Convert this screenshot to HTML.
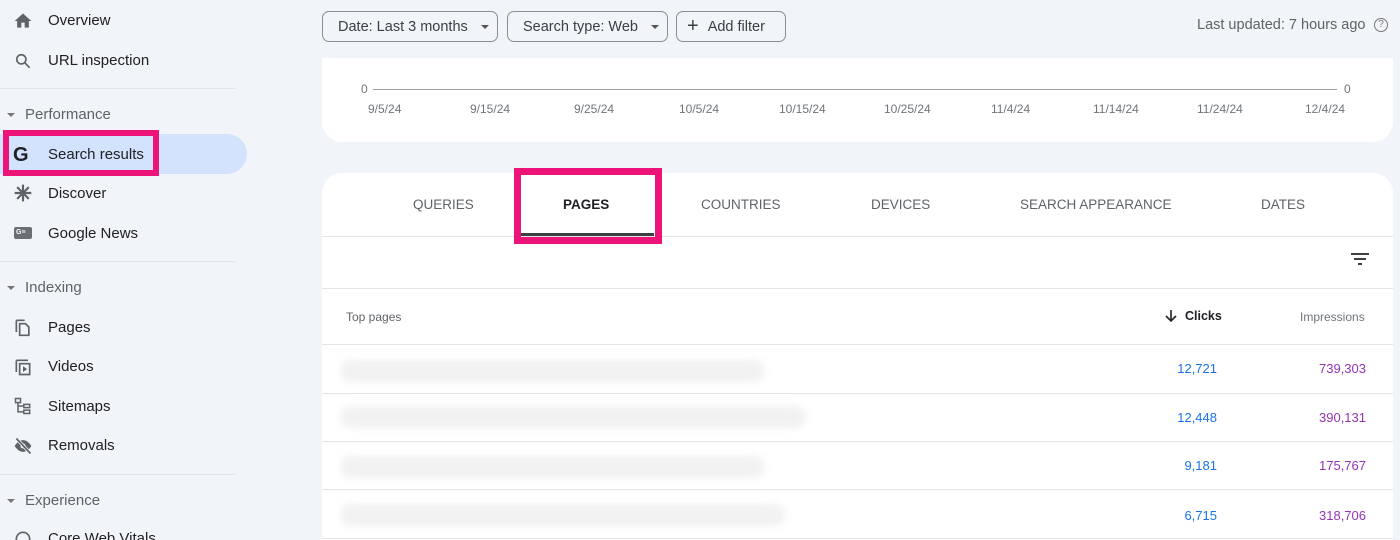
<!DOCTYPE html>
<html><head><style>
*{margin:0;padding:0;box-sizing:border-box}
html,body{width:1400px;height:540px;overflow:hidden}
body{background:#f1f4f9;font-family:"Liberation Sans",sans-serif;position:relative;color:#202124}
.a{position:absolute}
.nav{left:48px;font-size:15px;color:#202124}
.sec{left:25px;font-size:15px;color:#5f6368}
.tri{left:7px;width:0;height:0;border-left:4px solid transparent;border-right:4px solid transparent;border-top:4px solid #777}
.hr{left:0;width:235px;height:1px;background:#e0e3e8}
.ic{left:13px;width:20px;height:20px}
.btn{top:11px;height:31px;border:1px solid #8a8d91;border-radius:7px;font-size:14.5px;color:#3c4043;display:flex;align-items:center;padding-left:15px}
.dd{display:inline-block;width:0;height:0;border-left:4px solid transparent;border-right:4px solid transparent;border-top:4px solid #555;margin-left:13px}
.dt{top:102px;font-size:12px;color:#70757a}
.tab{top:197px;font-size:13.5px;color:#5f6368;letter-spacing:0}
.line{left:322px;width:1071px;height:1px;background:#e3e5e8}
.blur{left:340px;height:22px;border-radius:11px;background:#f1f1f1;filter:blur(4px)}
.c{font-size:13px;color:#1a73e8;text-align:right;width:100px}
.i{font-size:13px;color:#9334b7;text-align:right;width:100px}
</style></head><body>
<div class="a" style="left:0;top:134px;width:247px;height:40px;background:#d3e3fd;border-radius:0 20px 20px 0"></div>
<svg class="a ic" style="top:11px" viewBox="0 0 24 24"><path d="M10 20v-6h4v6h5v-8h3L12 3 2 12h3v8z" fill="#5f6368"/></svg>
<div class="a nav" style="top:12px">Overview</div>
<svg class="a ic" style="top:51px" viewBox="0 0 24 24"><circle cx="10" cy="10" r="5.5" fill="none" stroke="#5f6368" stroke-width="2"/><path d="M14 14l6 6" stroke="#5f6368" stroke-width="2"/></svg>
<div class="a nav" style="top:52px">URL inspection</div>
<div class="a hr" style="top:88px"></div>
<div class="a tri" style="top:113px"></div><div class="a sec" style="top:106px">Performance</div>
<div class="a" style="left:13px;top:144px;font-size:20px;font-weight:bold;color:#202124">G</div>
<div class="a nav" style="top:146px">Search results</div>
<div class="a" style="left:3px;top:130px;width:156px;height:46px;border:6px solid #ec1478"></div>
<svg class="a ic" style="top:183px" viewBox="0 0 24 24"><path d="M12 2v20M2 12h20M5 5l14 14M19 5L5 19" stroke="#5f6368" stroke-width="2.6"/></svg>
<div class="a nav" style="top:185px">Discover</div>
<div class="a" style="left:14px;top:227px;width:18px;height:12px;background:#6b6f74;border-radius:2px;color:#fff;font-size:7px;font-weight:bold;line-height:12px;padding-left:2px">G≡</div>
<div class="a nav" style="top:225px">Google News</div>
<div class="a hr" style="top:261px"></div>
<div class="a tri" style="top:286px"></div><div class="a sec" style="top:279px">Indexing</div>
<svg class="a ic" style="top:317px" viewBox="0 0 24 24"><path d="M4 4v14M4 4h10M8 8h7l4 4v10H8z" fill="none" stroke="#5f6368" stroke-width="2"/></svg>
<div class="a nav" style="top:319px">Pages</div>
<svg class="a ic" style="top:357px" viewBox="0 0 24 24"><path d="M4 4v14M4 4h14M8 8h12v13H8z" fill="none" stroke="#5f6368" stroke-width="2"/><path d="M12 11v7l5-3.5z" fill="#5f6368"/></svg>
<div class="a nav" style="top:358px">Videos</div>
<svg class="a ic" style="top:396px" viewBox="0 0 24 24"><path d="M3 3h6v5H3zM13 10h7v4h-7zM13 17h7v4h-7zM6 8v11h7M6 12h7" fill="none" stroke="#5f6368" stroke-width="1.8"/></svg>
<div class="a nav" style="top:398px">Sitemaps</div>
<svg class="a ic" style="top:436px" viewBox="0 0 24 24"><path d="M2 12s4-7 10-7 10 7 10 7-4 7-10 7S2 12 2 12z" fill="#5f6368"/><circle cx="12" cy="12" r="3" fill="#f1f4f9"/><path d="M4 3l17 18" stroke="#f1f4f9" stroke-width="4"/><path d="M4 3l17 18" stroke="#5f6368" stroke-width="2"/></svg>
<div class="a nav" style="top:437px">Removals</div>
<div class="a hr" style="top:474px"></div>
<div class="a tri" style="top:499px"></div><div class="a sec" style="top:492px">Experience</div>
<svg class="a ic" style="top:529px" viewBox="0 0 24 24"><circle cx="12" cy="12" r="8" fill="none" stroke="#5f6368" stroke-width="2"/></svg>
<div class="a nav" style="top:530px">Core Web Vitals</div>
<div class="a btn" style="left:322px;width:176px">Date: Last 3 months<span class="dd"></span></div>
<div class="a btn" style="left:507px;width:161px">Search type: Web<span class="dd"></span></div>
<div class="a btn" style="left:676px;width:110px;padding-left:10px"><span style="font-size:20px;margin-right:9px;font-weight:300">+</span>Add filter</div>
<div class="a" style="left:1197px;top:17px;font-size:14.5px;color:#5f6368">Last updated: 7 hours ago</div>
<div class="a" style="left:1374px;top:18px;width:14px;height:14px;border:1.5px solid #777;border-radius:50%;font-size:10px;text-align:center;line-height:11px;color:#777">?</div>
<div class="a" style="left:322px;top:58px;width:1071px;height:84px;background:#fff;border-radius:0 0 20px 20px"></div>
<div class="a" style="left:361px;top:82px;font-size:12px;color:#70757a">0</div>
<div class="a" style="left:373px;top:89px;width:964px;height:1px;background:#9aa0a6"></div>
<div class="a" style="left:1344px;top:82px;font-size:12px;color:#70757a">0</div>
<div class="a dt" style="left:368px">9/5/24</div>
<div class="a dt" style="left:470px">9/15/24</div>
<div class="a dt" style="left:574px">9/25/24</div>
<div class="a dt" style="left:679px">10/5/24</div>
<div class="a dt" style="left:779px">10/15/24</div>
<div class="a dt" style="left:884px">10/25/24</div>
<div class="a dt" style="left:991px">11/4/24</div>
<div class="a dt" style="left:1093px">11/14/24</div>
<div class="a dt" style="left:1197px">11/24/24</div>
<div class="a dt" style="left:1305px">12/4/24</div>
<div class="a" style="left:322px;top:173px;width:1071px;height:370px;background:#fff;border-radius:20px 20px 0 0"></div>
<div class="a tab" style="left:413px">QUERIES</div>
<div class="a tab" style="left:563px;color:#202124;font-weight:bold">PAGES</div>
<div class="a tab" style="left:701px">COUNTRIES</div>
<div class="a tab" style="left:871px">DEVICES</div>
<div class="a tab" style="left:1020px">SEARCH APPEARANCE</div>
<div class="a tab" style="left:1261px">DATES</div>
<div class="a line" style="top:236px"></div>
<div class="a" style="left:521px;top:233px;width:133px;height:3px;background:#3c4043"></div>
<div class="a" style="left:514px;top:168px;width:148px;height:76px;border:7px solid #ec1478"></div>
<svg class="a" style="left:1350px;top:251px" width="20" height="16" viewBox="0 0 20 16"><path d="M1 3h18M4 8h12M8 13h4" stroke="#3c4043" stroke-width="2"/></svg>
<div class="a line" style="top:288px"></div>
<div class="a" style="left:346px;top:310px;font-size:12px;color:#5f6368">Top pages</div>
<svg class="a" style="left:1165px;top:309px" width="12" height="13" viewBox="0 0 12 13"><path d="M6 1v11M1 7l5 5 5-5" fill="none" stroke="#202124" stroke-width="1.6"/></svg>
<div class="a" style="left:1185px;top:309px;font-size:12.5px;color:#202124;font-weight:bold">Clicks</div>
<div class="a" style="left:1300px;top:310px;font-size:12px;color:#70757a">Impressions</div>
<div class="a line" style="top:344px"></div>
<div class="a line" style="top:393px"></div>
<div class="a line" style="top:441px"></div>
<div class="a line" style="top:489px"></div>
<div class="a line" style="top:538px"></div>
<div class="a blur" style="top:360px;width:425px"></div>
<div class="a blur" style="top:406px;width:466px"></div>
<div class="a blur" style="top:456px;width:425px"></div>
<div class="a blur" style="top:504px;width:445px"></div>
<div class="a c" style="left:1117px;top:361px">12,721</div><div class="a i" style="left:1266px;top:361px">739,303</div>
<div class="a c" style="left:1117px;top:410px">12,448</div><div class="a i" style="left:1266px;top:410px">390,131</div>
<div class="a c" style="left:1117px;top:458px">9,181</div><div class="a i" style="left:1266px;top:458px">175,767</div>
<div class="a c" style="left:1117px;top:508px">6,715</div><div class="a i" style="left:1266px;top:508px">318,706</div>
</body></html>
